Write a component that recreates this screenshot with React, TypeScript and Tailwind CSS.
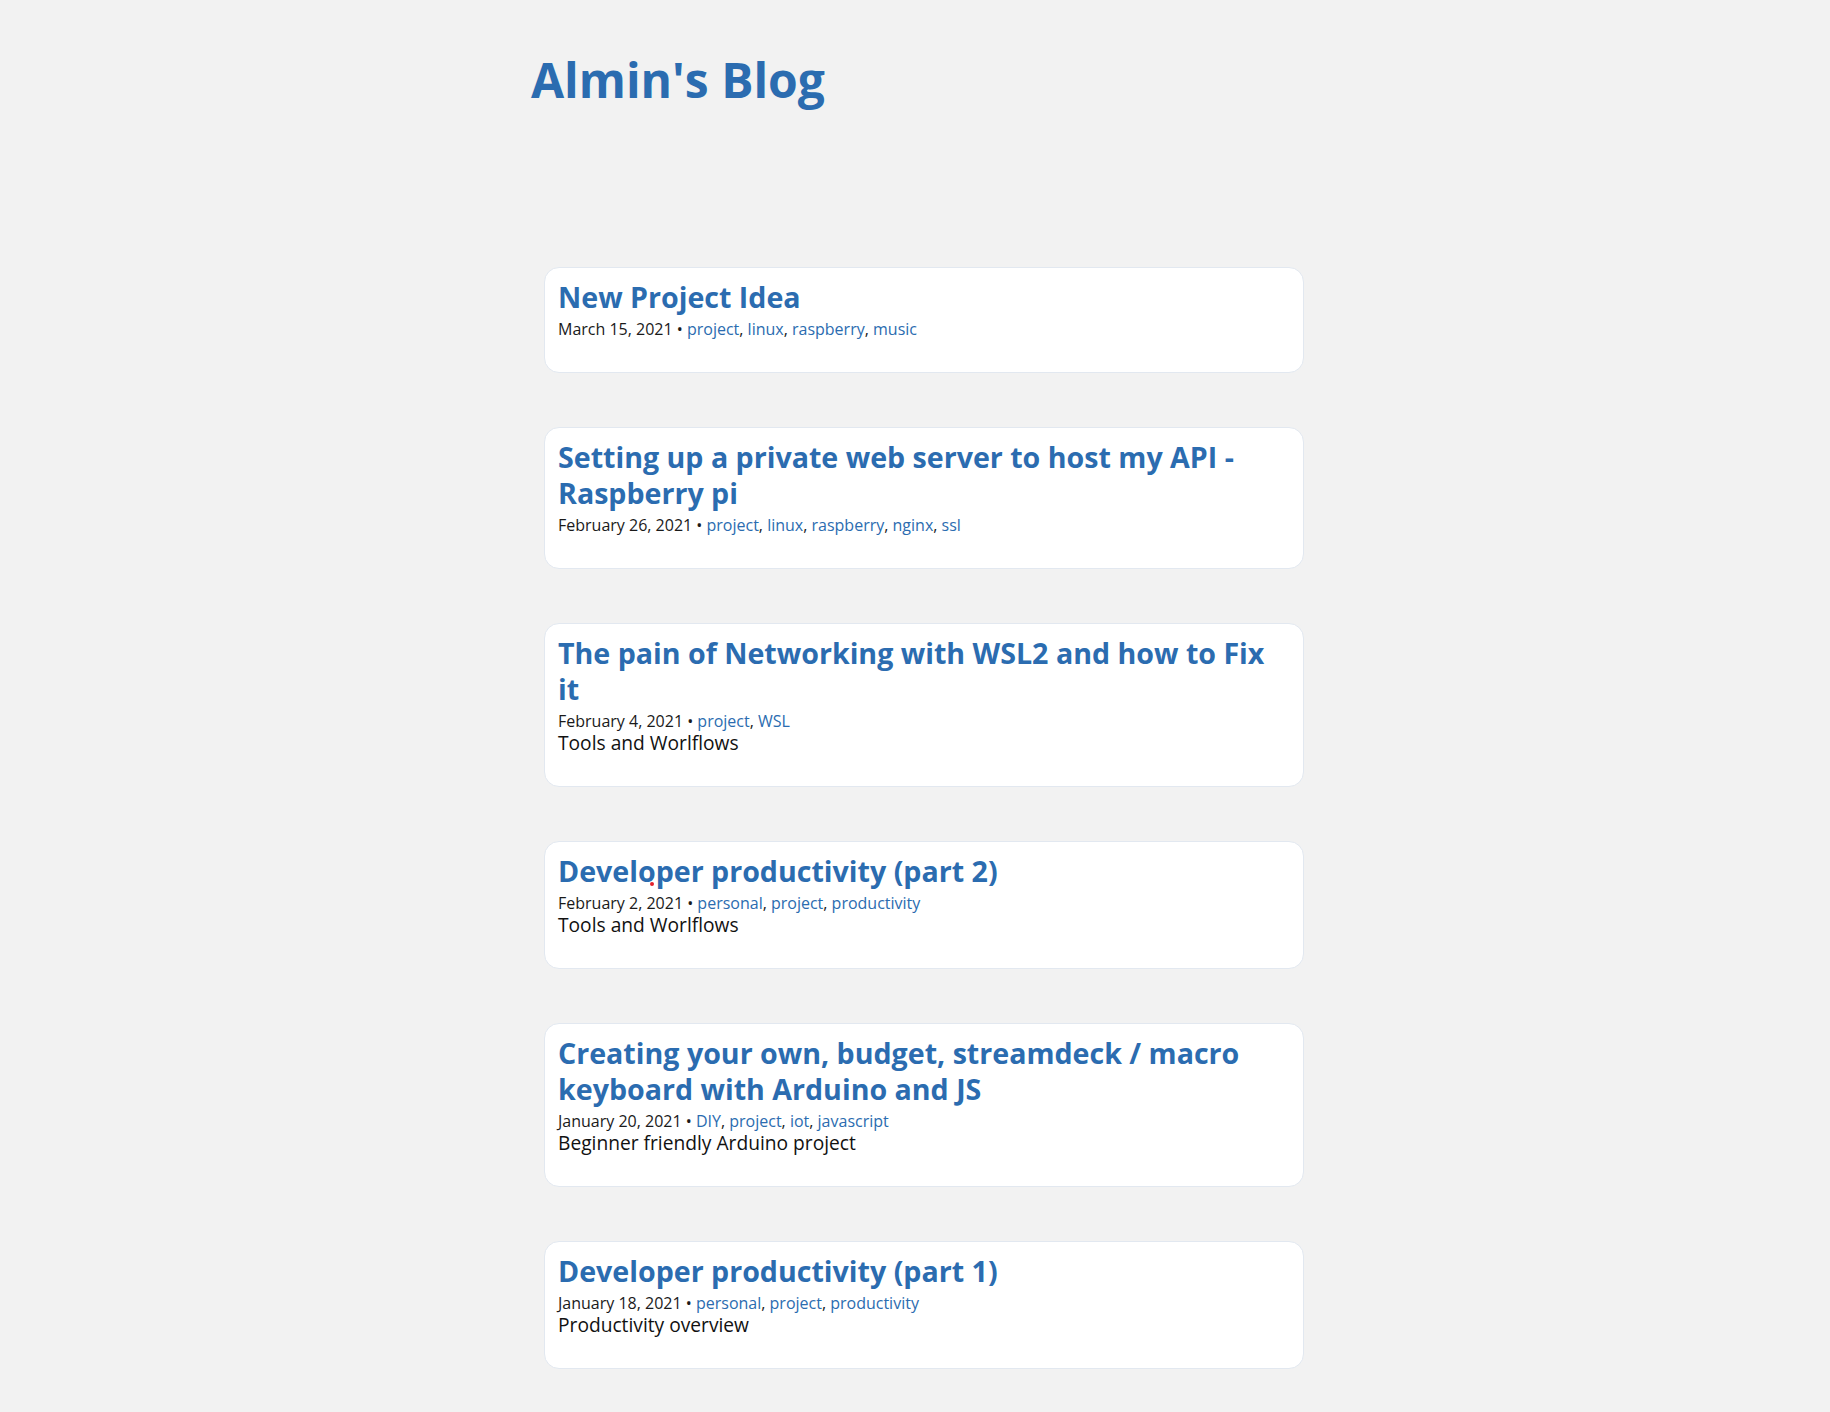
import React from "react";

type Post = {
  title: string;
  date: string;
  tags: string[];
  desc?: string;
  dot?: boolean;
};

const posts: Post[] = [
  { title: "New Project Idea", date: "March 15, 2021", tags: ["project", "linux", "raspberry", "music"] },
  {
    title: "Setting up a private web server to host my API - Raspberry pi",
    date: "February 26, 2021",
    tags: ["project", "linux", "raspberry", "nginx", "ssl"],
  },
  {
    title: "The pain of Networking with WSL2 and how to Fix it",
    date: "February 4, 2021",
    tags: ["project", "WSL"],
    desc: "Tools and Worlflows",
  },
  {
    title: "Developer productivity (part 2)",
    date: "February 2, 2021",
    tags: ["personal", "project", "productivity"],
    desc: "Tools and Worlflows",
    dot: true,
  },
  {
    title: "Creating your own, budget, streamdeck / macro keyboard with Arduino and JS",
    date: "January 20, 2021",
    tags: ["DIY", "project", "iot", "javascript"],
    desc: "Beginner friendly Arduino project",
  },
  {
    title: "Developer productivity (part 1)",
    date: "January 18, 2021",
    tags: ["personal", "project", "productivity"],
    desc: "Productivity overview",
  },
];

function Card({ p }: { p: Post }) {
  return (
    <article className="relative w-[760px] bg-white border border-[#e2e8f0] rounded-[15px] pl-[13px] pr-[20px] pt-[11px] pb-[32px]">
      <h2 className="text-[28.6px] font-bold leading-[36px] text-[#2b6cb0]">
        <a href="#">{p.title}</a>
      </h2>
      <div className="mt-[3px] text-[16px] leading-[22px] text-[#1a1a1a]">
        {p.date} •{" "}
        {p.tags.map((t, i) => (
          <React.Fragment key={t}>
            <a href="#" className="text-[#2b6cb0]">
              {t}
            </a>
            {i < p.tags.length - 1 ? ", " : ""}
          </React.Fragment>
        ))}
      </div>
      {p.desc && <p className="text-[19.2px] leading-[22px] text-[#111111]">{p.desc}</p>}
      {p.dot && <span className="absolute left-[105px] top-[40px] w-[4px] h-[4px] rounded-full bg-[#e3212b]" />}
    </article>
  );
}

export default function App() {
  return (
    <div className="min-h-screen bg-[#f2f2f2] font-['Open_Sans',sans-serif]">
      <div className="ml-[531px] w-[790px] pb-[43px]">
        <header className="pt-[48px]">
          <h1 className="text-[48px] font-bold leading-[64px] text-[#2b6cb0]">Almin's Blog</h1>
        </header>
        <main className="mt-[155px] ml-[13px] flex flex-col gap-[54px]">
          {posts.map((p) => (
            <Card key={p.title} p={p} />
          ))}
        </main>
      </div>
    </div>
  );
}
